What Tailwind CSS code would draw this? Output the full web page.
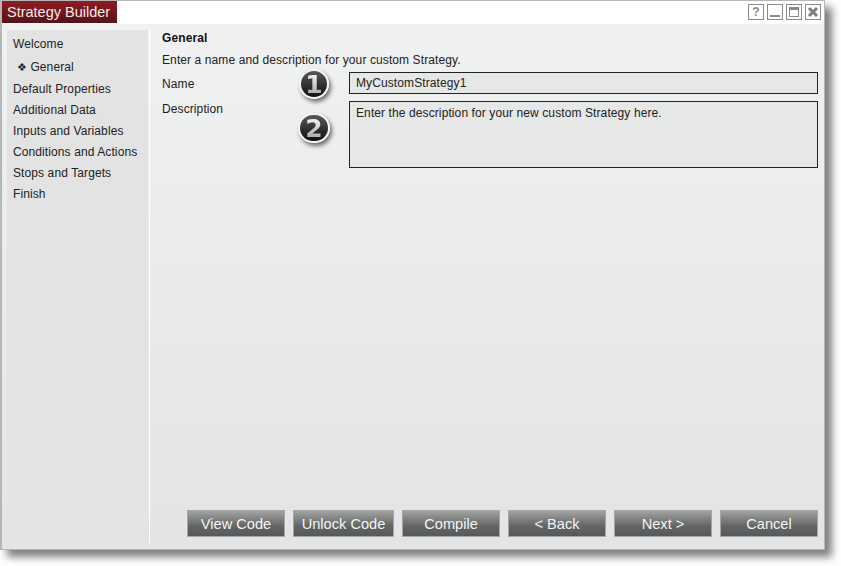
<!DOCTYPE html>
<html>
<head>
<script src="https://cdn.jsdelivr.net/npm/@tailwindcss/browser@4"></script>
</head>
<body class="bg-white font-['Liberation_Sans',Arial,sans-serif]">
<div class="w-[841px] h-[566px] overflow-hidden bg-white">
  <div class="relative w-[825px] h-[550px] flex flex-col bg-[#e4e5e6] border-t border-l-2 border-r border-b border-[#b4b6b8] shadow-[7px_7px_8px_rgba(0,0,0,0.5)]">
    <div class="h-[23px] shrink-0 bg-white border-b border-black flex justify-between items-start box-content -mb-px">
      <div class="w-[115px] h-[22px] bg-gradient-to-b from-[#8f1b21] to-[#581217] text-[#f3e9e9] text-[14.5px] leading-[22px] pl-[5px] whitespace-nowrap">Strategy Builder</div>
      <div class="flex gap-[3px] mt-[3px] mr-[3px]">
        <div class="w-4 h-4 border border-[#8a8a8a] bg-white text-[#8a8a8a] text-[12px] font-bold leading-[14px] text-center">?</div>
        <div class="w-4 h-4 border border-[#8a8a8a] bg-white flex items-end justify-center pb-[2px]"><div class="w-[10px] h-[2px] bg-[#8a8a8a]"></div></div>
        <div class="w-4 h-4 border border-[#8a8a8a] bg-white flex justify-center pt-[2px]"><div class="w-[10px] h-[10px] border border-[#8a8a8a] border-t-[3px]"></div></div>
        <div class="w-4 h-4 border border-[#8a8a8a] bg-white flex items-center justify-center">
          <svg width="12" height="12" viewBox="0 0 12 12"><path d="M2 2 L10 10 M10 2 L2 10" stroke="#7c7c7c" stroke-width="3" fill="none"/></svg>
        </div>
      </div>
    </div>
    <div class="flex-1 flex min-h-0 bg-gradient-to-b from-[#f0f1f1] to-[#e3e4e5] pl-[5px] pb-[6px] pt-[6px]">
      <nav class="w-[141px] shrink-0 bg-[#e3e3e3] text-[12px] leading-[21px] tracking-[0.1px] text-[#222] pl-[6px] pt-[4px]">
        <div class="h-[23px]">Welcome</div>
        <div class="h-[22px] pl-1"><span class="text-[11px] font-['DejaVu_Sans']">❖</span> General</div>
        <div>Default Properties</div>
        <div>Additional Data</div>
        <div>Inputs and Variables</div>
        <div class="whitespace-nowrap">Conditions and Actions</div>
        <div>Stops and Targets</div>
        <div>Finish</div>
      </nav>
      <div class="w-px shrink-0 bg-white ml-px"></div>
      <main class="flex-1 flex flex-col pl-3 pr-[6px] text-[12px] tracking-[0.1px] text-[#222]">
        <div class="font-bold leading-[16px] text-[#111]">General</div>
        <div class="leading-[16px] mt-[6px]">Enter a name and description for your custom Strategy.</div>
        <div class="flex mt-[4px] h-[22px] items-center">
          <div class="w-[187px] leading-[16px] pt-px">Name</div>
          <div class="flex-1 h-[22px] border border-[#222] bg-[#e6e7e7] pl-[6px] leading-[20px]">MyCustomStrategy1</div>
        </div>
        <div class="flex mt-[7px] h-[67px]">
          <div class="w-[187px] leading-[16px]">Description</div>
          <div class="flex-1 border border-[#222] bg-[#e6e7e7] px-[6px] pt-[3px] leading-[16px]">Enter the description for your new custom Strategy here.</div>
        </div>
        <div class="mt-auto mb-[6px] flex justify-end gap-2 text-[14.6px] tracking-normal text-[#f2f4f6]">
          <div class="w-[98px] h-[27px] border border-[#a4a6a8] bg-gradient-to-b from-[#a2a4a4] via-[#646666] via-60% to-[#565859] text-center leading-[26px]">View Code</div>
          <div class="w-[101px] h-[27px] border border-[#a4a6a8] bg-gradient-to-b from-[#a2a4a4] via-[#646666] via-60% to-[#565859] text-center leading-[26px]">Unlock Code</div>
          <div class="w-[98px] h-[27px] border border-[#a4a6a8] bg-gradient-to-b from-[#a2a4a4] via-[#646666] via-60% to-[#565859] text-center leading-[26px]">Compile</div>
          <div class="w-[98px] h-[27px] border border-[#a4a6a8] bg-gradient-to-b from-[#a2a4a4] via-[#646666] via-60% to-[#565859] text-center leading-[26px]">&lt; Back</div>
          <div class="w-[98px] h-[27px] border border-[#a4a6a8] bg-gradient-to-b from-[#a2a4a4] via-[#646666] via-60% to-[#565859] text-center leading-[26px]">Next &gt;</div>
          <div class="w-[98px] h-[27px] border border-[#a4a6a8] bg-gradient-to-b from-[#a2a4a4] via-[#646666] via-60% to-[#565859] text-center leading-[26px]">Cancel</div>
        </div>
      </main>
    </div>
    <div class="absolute left-[297px] top-[68px] w-[30px] h-[30px] rounded-full border-2 border-[#f4f4f4] bg-gradient-to-b from-[#5a5a5a] to-[#111] shadow-[2px_3px_4px_rgba(0,0,0,0.55)] flex items-center justify-center">
      <span class="text-[25px] font-bold font-['DejaVu_Sans'] leading-none bg-gradient-to-b from-white to-[#a0a0a0] bg-clip-text text-transparent">1</span>
    </div>
    <div class="absolute left-[296px] top-[112px] w-[32px] h-[30px] rounded-full border-2 border-[#f4f4f4] bg-gradient-to-b from-[#5a5a5a] to-[#111] shadow-[2px_3px_4px_rgba(0,0,0,0.55)] flex items-center justify-center">
      <span class="text-[25px] font-bold font-['DejaVu_Sans'] leading-none bg-gradient-to-b from-white to-[#a0a0a0] bg-clip-text text-transparent">2</span>
    </div>
  </div>
</div>
</body>
</html>
